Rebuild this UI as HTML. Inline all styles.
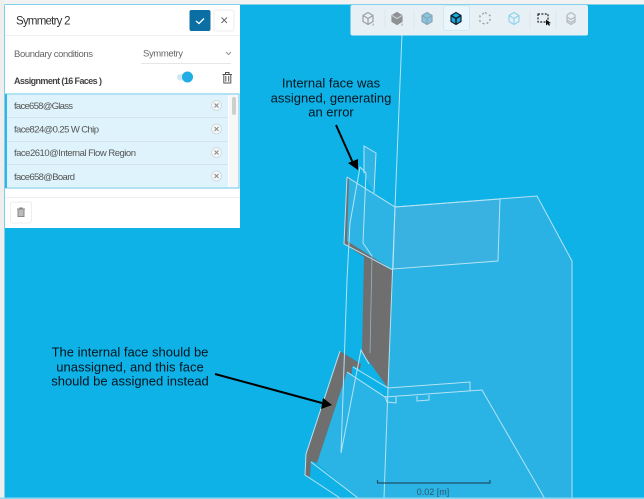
<!DOCTYPE html>
<html><head><meta charset="utf-8"><style>
html,body{margin:0;padding:0;width:644px;height:499px;overflow:hidden;background:#0eb2e6}
svg{display:block;position:absolute;left:0;top:0}
text{font-family:"Liberation Sans",sans-serif}
</style></head><body>
<svg width="644" height="499" viewBox="0 0 644 499">
<rect width="644" height="499" fill="#0eb2e6"/>
<!-- body fills -->
<polygon points="395,207 537,196 572,261 572,499 384,499 388,388 393,269" fill="#29b2e3"/>
<polygon points="347,372 385,397 482,390 545,499 358,499 317,463" fill="#2ab4e5"/>
<polygon points="347,177 395,207 393,269 345,243" fill="#2db4e4"/>
<polygon points="395,207 500,199 498,261 393,269" fill="#3ab2e1"/>
<polygon points="364,146 376,153 374,193 363,173" fill="#2eb5e6"/>
<!-- grey faces -->
<g fill="#6f6f6f">
<polygon points="344,244 347,177 349,178 347,241 393,270 388,388 370,363 362,353 364,257"/>
<polygon points="340,351 361,364 360,369 353,366 352,367 352,374 347,372 317,463 311,461 310,477 305,475 306,454"/>
</g>
<!-- outlines -->
<g fill="none" stroke="#b5e3f5" stroke-width="1">
<polyline points="402,34 395,207 388,388 384,498"/>
<polyline points="347,177 395,207 537,196 572,261 572,499"/>
<polygon points="395,207 500,199 498,261 393,269"/>
<polyline points="347,177 344,244 393,270"/>
<polyline points="364,173 364,146 376,153 374,193"/>
<polyline points="347,280 341,453 361,350 369,364"/>
<polyline points="347,280 350,223 360,167 366,173 363,243 372,256"/>
<polyline points="340,351 306,454 305,475 340,498"/>
<polyline points="311,462 358,498"/>
<polyline points="353,367 388,388 470,382 470,391"/>
<polyline points="347,372 385,397 482,390 545,499"/>
<polyline points="385,396 387,402 396,403 396,397"/>
<polyline points="417,396 417,401 429,400 429,395"/>
</g>
<line x1="372" y1="256" x2="370" y2="353" stroke="#93b4c2" stroke-width=".8"/>
<!-- scale -->
<path d="M377.500 480v3h112.500v-3" fill="none" stroke="#1f4f66" stroke-width="1.200"/>
<text x="433" y="495" font-size="9" text-anchor="middle" fill="#2d566c">0.02 [m]</text>
<!-- arrows -->
<line x1="336" y1="125" x2="353" y2="163" stroke="#000" stroke-width="2"/>
<polygon points="358,170 348,163 358,159" fill="#000"/>
<line x1="215" y1="374" x2="322" y2="403" stroke="#000" stroke-width="2"/>
<polygon points="332,405 321,409 323,398" fill="#000"/>
<!-- annotations -->
<g font-size="13" text-anchor="middle" fill="#021520">
<text x="331" y="87.500">Internal face was</text>
<text x="331" y="102.500">assigned, generating</text>
<text x="331" y="116.500">an error</text>
<text x="130" y="356.500">The internal face should be</text>
<text x="130" y="371.500">unassigned, and this face</text>
<text x="130" y="385.500">should be assigned instead</text>
</g>
<!-- chrome strips -->
<rect x="0" y="0" width="644" height="4.500" fill="#f2f2f2"/>
<rect x="0" y="0" width="4.500" height="499" fill="#eeeeee"/>
<rect x="0" y="497.500" width="644" height="1.500" fill="#8fd6ef"/>
<!-- toolbar -->
<rect x="350.500" y="5" width="237.500" height="30.500" rx="2" fill="#e7f0f4"/>
<rect x="443.500" y="5.500" width="26" height="25" rx="2" fill="#eaf6fb" stroke="#d3e9f2"/>
<g stroke="#dce6ea"><line x1="385" y1="10" x2="385" y2="28"/><line x1="414" y1="10" x2="414" y2="28"/><line x1="530" y1="10" x2="530" y2="28"/><line x1="556" y1="10" x2="556" y2="28"/></g>
<g fill="none" stroke-width="1.200" stroke-linejoin="round">
<g stroke="#9a9ea1"><path d="M368 12.500l5 3v6l-5 3-5-3v-6zM363 15.500l5 3 5-3M368 18.500v6"/></g>
<path d="M397 12.500l5 3v6l-5 3-5-3v-6z" fill="#8e9295" stroke="#8e9295"/>
<path d="M392 15.500l5 3 5-3" stroke="#c9cfd2"/>
<path d="M427 12.500l5 3v6l-5 3-5-3v-6z" fill="#86c6e3" stroke="#8aa5b2"/>
<path d="M422 15.500l5 3 5-3M427 18.500v6" stroke="#8aa5b2"/>
<path d="M456 12.500l5 3v6l-5 3-5-3v-6z" fill="#1aa9dc" stroke="#10222c"/>
<path d="M451 15.500l5 3 5-3M456 18.500v6" stroke="#10222c" stroke-width="1.600"/>
<path d="M485 12.500l5 3v6l-5 3-5-3v-6z" stroke="#8b9499" stroke-dasharray="2 2.600"/>
<path d="M514 12.500l5 3v6l-5 3-5-3v-6zM509 15.500l5 3 5-3M514 18.500v6" stroke="#8fd3ee"/>
<rect x="538" y="14" width="10" height="8" stroke="#222" stroke-dasharray="2 1.400"/>
<path d="M546 19.500l0 6 1.600-1.400 1.400 1.600 1-.6-1-1.800 2-.2z" fill="#111" stroke="none"/>
<path d="M571 12.500l4 2.500v7l-4 2.500-4-2.500v-7zM567 17l4 2.500 4-2.500M567 20l4 2.500 4-2.500" stroke="#b4bbbf"/>
</g>
<path d="M374 25.500h-2.500l2.500-2.500zM403 25.500h-2.500l2.500-2.500z" fill="#b4bcc0"/>
<!-- panel -->
<rect x="5" y="5" width="235" height="223" fill="#fff"/>
<line x1="5" y1="35.500" x2="240" y2="35.500" stroke="#efefef"/>
<text x="16" y="24.500" font-size="11.500" fill="#333" textLength="54.500">Symmetry 2</text>
<rect x="189.500" y="10" width="21" height="21" rx="2" fill="#0b6fa4"/>
<path d="M196 21l3 2.500 5-5" fill="none" stroke="#fff" stroke-width="1.300"/>
<rect x="214" y="10" width="20" height="21" rx="2" fill="#fff" stroke="#eee"/>
<path d="M221.500 17.500l5.500 5.500M227 17.500l-5.500 5.500" stroke="#666" stroke-width="1"/>
<text x="14" y="57" font-size="9.500" fill="#666" textLength="79">Boundary conditions</text>
<text x="143" y="56.500" font-size="9.500" fill="#666" textLength="40">Symmetry</text>
<path d="M226 52l2.500 2.500 2.500-2.500" fill="none" stroke="#777" stroke-width=".8"/>
<line x1="141" y1="63.500" x2="231" y2="63.500" stroke="#e6e6e6"/>
<text x="14" y="84" font-size="9" font-weight="bold" fill="#444" textLength="88">Assignment (16 Faces )</text>
<rect x="177" y="74" width="14" height="6.500" rx="3.200" fill="#cfe9f4"/>
<circle cx="187.500" cy="77" r="5.500" fill="#1fade3"/>
<path d="M222.500 74.500h9.500M225.500 74.500v-2h3.500v2M223.800 74.500v8.500h7v-8.500M225.800 76v5.500M228.700 76v5.500" fill="none" stroke="#555" stroke-width="1"/>
<!-- list -->
<rect x="5.500" y="94" width="233.500" height="94" fill="#fff" stroke="#63c5ea"/>
<rect x="5" y="94" width="2" height="94" fill="#32b4e6"/>
<rect x="7" y="95" width="221" height="92" fill="#def3fb"/>
<g stroke="#d2e4ea"><line x1="7" y1="117.500" x2="228" y2="117.500"/><line x1="7" y1="141.500" x2="228" y2="141.500"/><line x1="7" y1="164.500" x2="228" y2="164.500"/></g>
<rect x="229" y="95" width="9" height="92" fill="#f7f7f7"/>
<rect x="232" y="97" width="4" height="18" rx="2" fill="#cfcfcf"/>
<g font-size="9.500" fill="#555">
<text x="14" y="109" textLength="59">face658@Glass</text>
<text x="14" y="132.500" textLength="85">face824@0.25 W Chip</text>
<text x="14" y="156" textLength="122">face2610@Internal Flow Region</text>
<text x="14" y="180" textLength="61">face658@Board</text>
</g>
<g fill="#f4f8fa" stroke="#d5dbde"><circle cx="216.500" cy="105.500" r="5"/><circle cx="216.500" cy="129" r="5"/><circle cx="216.500" cy="152.500" r="5"/><circle cx="216.500" cy="176" r="5"/></g>
<path d="M214.500 103.500l4 4m0-4l-4 4M214.500 127l4 4m0-4l-4 4M214.500 150.500l4 4m0-4l-4 4M214.500 174l4 4m0-4l-4 4" stroke="#888" stroke-width="1"/>
<!-- footer -->
<line x1="5" y1="197.500" x2="240" y2="197.500" stroke="#efefef"/>
<rect x="10.500" y="202" width="21" height="21" rx="2" fill="#fff" stroke="#eee"/>
<path d="M17 209h8M19.500 209v-1h3v1M18 209v7.500h6V209" fill="#bbb" stroke="#888" stroke-width="1"/>
</svg>
</body></html>
